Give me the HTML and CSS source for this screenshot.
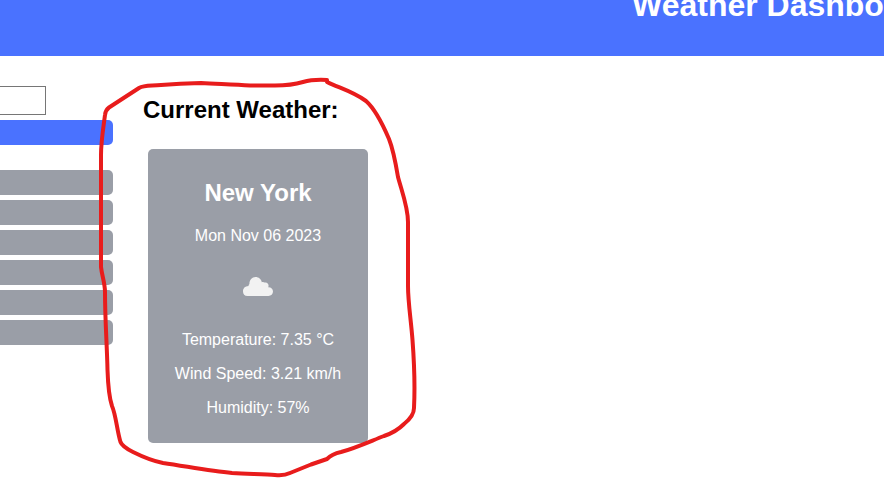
FILE: index.html
```html
<!DOCTYPE html>
<html lang="en">
<head>
<meta charset="utf-8">
<title>Weather Dashboard</title>
<link rel="stylesheet" href="styles.css">
</head>
<body>
<header class="header"><h1 class="title">Weather Dashboard</h1></header>
<main class="main">
  <aside class="sidebar">
    <input class="search-input" type="text" aria-label="City">
    <button class="btn search-btn" aria-label="Search"></button>
    <div class="history">
      <button class="btn"></button>
      <button class="btn"></button>
      <button class="btn"></button>
      <button class="btn"></button>
      <button class="btn"></button>
      <button class="btn"></button>
    </div>
  </aside>
  <section class="current">
    <h2 class="heading">Current Weather:</h2>
    <article class="card">
      <h2 class="city">New York</h2>
      <p>Mon Nov 06 2023</p>
      <div class="icon-row">
        <svg width="50" height="50" viewBox="0 0 50 50"><path fill="#f2f2f2" d="M14.500 35A4.800 4.800 0 0 1 10 30.200c0-2.800 2-5 5.500-5.200.2-1 .4-1.500.9-2C16.400 19 19 16.100 22.500 16.100c3.200 0 5.700 2.200 6.300 5.200 1-.5 1.900-.4 2.700.3 2.200-.7 4.200 1 4.100 3.400l-.4 1.300c2.700-.2 4.800 1.700 4.800 4.300 0 2.500-2 4.400-4.500 4.400z"/></svg>
      </div>
      <p>Temperature: 7.35 °C</p>
      <p>Wind Speed: 3.21 km/h</p>
      <p>Humidity: 57%</p>
    </article>
  </section>
</main>
<svg class="annotation" width="884" height="489" viewBox="0 0 884 489"><path d="M327 80C318 79.500 310 80 303 82C293 85 287 85.500 275 85.500H250C235 84.500 220 84 201 83C185 83.500 175 84 161 85C150 86 144 85 139 88L109 107.500Q105.500 110 105 115C103 130 101 142 101 155V267C102 276 105 283 105 292C105 320 107 345 107.500 370C108 385 109 397 112 406C116 415 117 431 120.500 442C122 446 127 449 133 452C145 458 153 461 163 463C190 467 211 471 232 473C250 474 266 474 275 475Q284 476 290 473L311 464.500L327 459Q332 454 341 452C356 448 371 441 384 436Q396 432 404 424Q414 416 414 408C415 388 414 360 412.500 340C411 320 408 302 408 286V222C408 207 402 192 398 177C396 165 393 149 389 139C380 118 374 108 366 101C352 91 339 88 327 82V80"/></svg>
</body>
</html>
```
FILE: styles.css
```css
* { box-sizing: border-box; }
body {
  margin: 0;
  height: 489px;
  overflow: hidden;
  background: #fff;
  font: 16px "Liberation Sans", Arial, sans-serif;
}
.header {
  height: 56px;
  padding-left: 632px;
  overflow: hidden;
  background: #4a72ff;
  color: #fff;
}
.title {
  margin: -13px 0 0;
  font-size: 32px;
  line-height: 36px;
  white-space: nowrap;
}
.main { display: flex; align-items: flex-start; }
.sidebar {
  width: 113px;
  padding-top: 30px;
  display: flex;
  flex-direction: column;
}
.search-input {
  width: 56px;
  height: 29px;
  margin: 0 0 5px -10px;
  border: 1px solid #767676;
  border-radius: 0;
  background: #fff;
}
.btn {
  height: 25px;
  width: 123px;
  margin-left: -10px;
  padding: 0;
  border: 0;
  border-radius: 5px;
  background: #9a9ea7;
}
.search-btn { background: #4a72ff; }
.history {
  display: flex;
  flex-direction: column;
  gap: 5px;
  margin-top: 25px;
}
.current { padding: 40px 0 0 30px; }
.heading { margin: 0; font-size: 24px; line-height: 28px; }
.card {
  width: 220px;
  height: 294px;
  margin: 25px 0 0 5px;
  padding: 30px 10px 0;
  border-radius: 5px;
  background: #9a9ea7;
  color: #fff;
  text-align: center;
}
.city { margin: 0 0 20px; font-size: 24px; line-height: 28px; }
.card p { margin: 0 0 16px; line-height: 18px; }
.icon-row { height: 54px; margin-bottom: 16px; }
.icon-row svg { display: block; margin: 0 auto; }
.annotation { position: absolute; inset: 0; pointer-events: none; }
.annotation path {
  fill: none;
  stroke: #e81c1c;
  stroke-width: 4;
  stroke-linejoin: round;
  stroke-linecap: round;
}
```
